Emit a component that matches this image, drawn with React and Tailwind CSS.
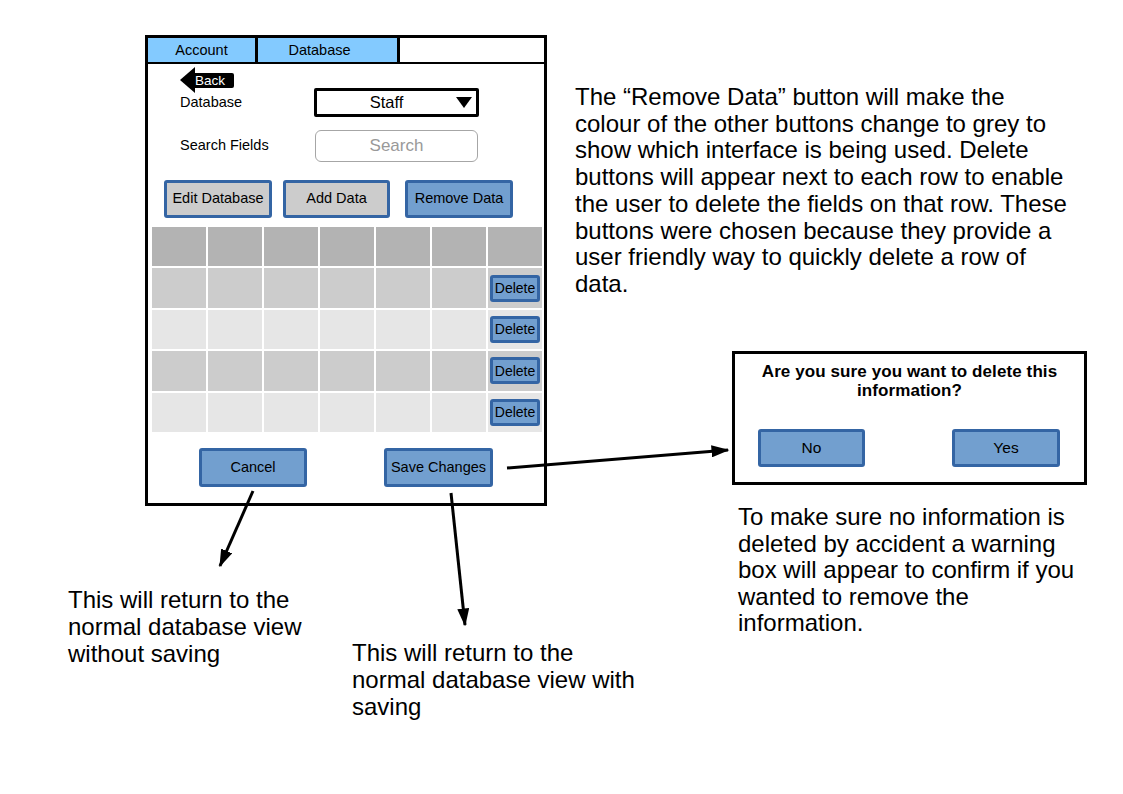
import React from "react";

const blueBtn = "bg-[#729fcf] border-[3px] border-[#3465a4] rounded-[3px] flex items-center justify-center text-black";
const grayBtn = "bg-[#cccccc] border-[3px] border-[#3465a4] rounded-[3px] flex items-center justify-center text-black";

const rows = [
  { bg: "bg-[#b3b3b3]", del: false },
  { bg: "bg-[#cccccc]", del: true },
  { bg: "bg-[#e6e6e6]", del: true },
  { bg: "bg-[#cccccc]", del: true },
  { bg: "bg-[#e6e6e6]", del: true },
];

const Wireframe = () => (
  <div className="absolute left-[145px] top-[35px] w-[402px] h-[471px] border-[3px] border-black bg-white flex flex-col">
    {/* tab bar */}
    <div className="flex h-[26px] border-b-[2px] border-black text-[14.5px]">
      <div className="w-[110px] bg-[#83caff] border-r-[3px] border-black flex items-center justify-center leading-none">
        Account
      </div>
      <div className="w-[142px] bg-[#83caff] border-r-[3px] border-black flex items-center justify-center leading-none pt-[1px] pr-[16px]">
        Database
      </div>
      <div className="flex-1 bg-white" />
    </div>

    <div className="pt-[3px] h-[24px] pl-[32px]">
      <div className="flex items-center h-[26px]">
        <div className="w-0 h-0 border-y-[13px] border-y-transparent border-r-[15px] border-r-black" />
        <div className="bg-black text-white h-[15px] w-[39px] rounded-r-[2px] text-[13.5px] leading-[15px]">
          Back
        </div>
      </div>
    </div>

    <div className="flex items-center h-[29px] text-[14.5px]">
      <div className="w-[166px] pl-[32px]">Database</div>
      <div className="relative w-[165px] h-[29px] border-[3px] border-black rounded-[2px] flex items-center justify-center pr-[20px] text-[16.5px]">
        Staff
        <div className="absolute right-[4px] top-[6px] w-0 h-0 border-x-[8px] border-x-transparent border-t-[11px] border-t-black" />
      </div>
    </div>

    <div className="flex items-center h-[32px] mt-[13px] text-[14.5px]">
      <div className="w-[167px] pl-[32px]">Search Fields</div>
      <div className="w-[163px] h-[32px] border border-[#a6a6a6] rounded-[6px] flex items-center justify-center text-[17px] text-[#999999]">
        Search
      </div>
    </div>

    <div className="flex mt-[18px] ml-[16px] h-[38px] text-[14.5px]">
      <div className={`${grayBtn} w-[108px]`}>Edit Database</div>
      <div className={`${grayBtn} w-[107px] ml-[11px]`}>Add Data</div>
      <div className={`${blueBtn} w-[108px] ml-[15px]`}>Remove Data</div>
    </div>

    {/* table */}
    <div className="ml-[4px] mt-[9px] w-[390px] grid grid-cols-7 gap-[2px]">
      {rows.map((r, i) =>
        Array.from({ length: 7 }).map((_, j) => (
          <div key={`${i}-${j}`} className={`${r.bg} h-[39.4px] flex items-center justify-center`}>
            {j === 6 && r.del && (
              <div className={`${blueBtn} w-[50px] h-[27px] text-[14px] leading-none`}>Delete</div>
            )}
          </div>
        ))
      )}
    </div>

    <div className="flex mt-[16px] ml-[51px] h-[39px] text-[14.5px]">
      <div className={`${blueBtn} w-[108px]`}>Cancel</div>
      <div className={`${blueBtn} w-[109px] ml-[77px]`}>Save Changes</div>
    </div>
  </div>
);

const Dialog = () => (
  <div className="absolute left-[732px] top-[351px] w-[355px] h-[134px] border-[3px] border-black bg-white flex flex-col">
    <div className="pt-[8px] text-center font-bold text-[17px] leading-[19px] px-[10px] tracking-[0.1px]">
      Are you sure you want to delete this information?
    </div>
    <div className="flex mt-auto mb-[15px] ml-[23px] text-[15.5px]">
      <div className={`${blueBtn} w-[107px] h-[38px]`}>No</div>
      <div className={`${blueBtn} w-[108px] h-[38px] ml-[87px]`}>Yes</div>
    </div>
  </div>
);

const Arrows = () => (
  <svg className="absolute inset-0 pointer-events-none" width="1123" height="794">
    <defs>
      <marker id="head" markerWidth="6" markerHeight="4" refX="5.5" refY="2" orient="auto" markerUnits="strokeWidth">
        <polygon points="0,0 6,2 0,4" fill="#000" />
      </marker>
    </defs>
    <line x1="253" y1="491" x2="220" y2="566" stroke="#000" strokeWidth="3" markerEnd="url(#head)" />
    <line x1="451" y1="493" x2="465" y2="625" stroke="#000" strokeWidth="3" markerEnd="url(#head)" />
    <line x1="507" y1="468" x2="728" y2="450" stroke="#000" strokeWidth="3" markerEnd="url(#head)" />
  </svg>
);

export default function App() {
  return (
    <div className="relative w-[1123px] h-[794px] bg-white text-black overflow-hidden font-['Liberation_Sans',Arial,sans-serif]">
      <Wireframe />
      <Dialog />
      <Arrows />

      <p className="absolute left-[575px] top-[84px] w-[494px] text-[24px] leading-[26.7px]">
        The “Remove Data” button will make the colour of the other buttons change to grey to show which
        interface is being used. Delete buttons will appear next to each row to enable the user to delete
        the fields on that row. These buttons were chosen because they provide a user friendly way to
        quickly delete a row of data.
      </p>

      <p className="absolute left-[738px] top-[504px] w-[345px] text-[24px] leading-[26.5px]">
        To make sure no information is deleted by accident a warning box will appear to confirm if you
        wanted to remove the information.
      </p>

      <p className="absolute left-[68px] top-[586px] w-[260px] text-[24px] leading-[27px]">
        This will return to the normal database view without saving
      </p>

      <p className="absolute left-[352px] top-[639px] w-[290px] text-[24px] leading-[27px]">
        This will return to the normal database view with saving
      </p>
    </div>
  );
}
